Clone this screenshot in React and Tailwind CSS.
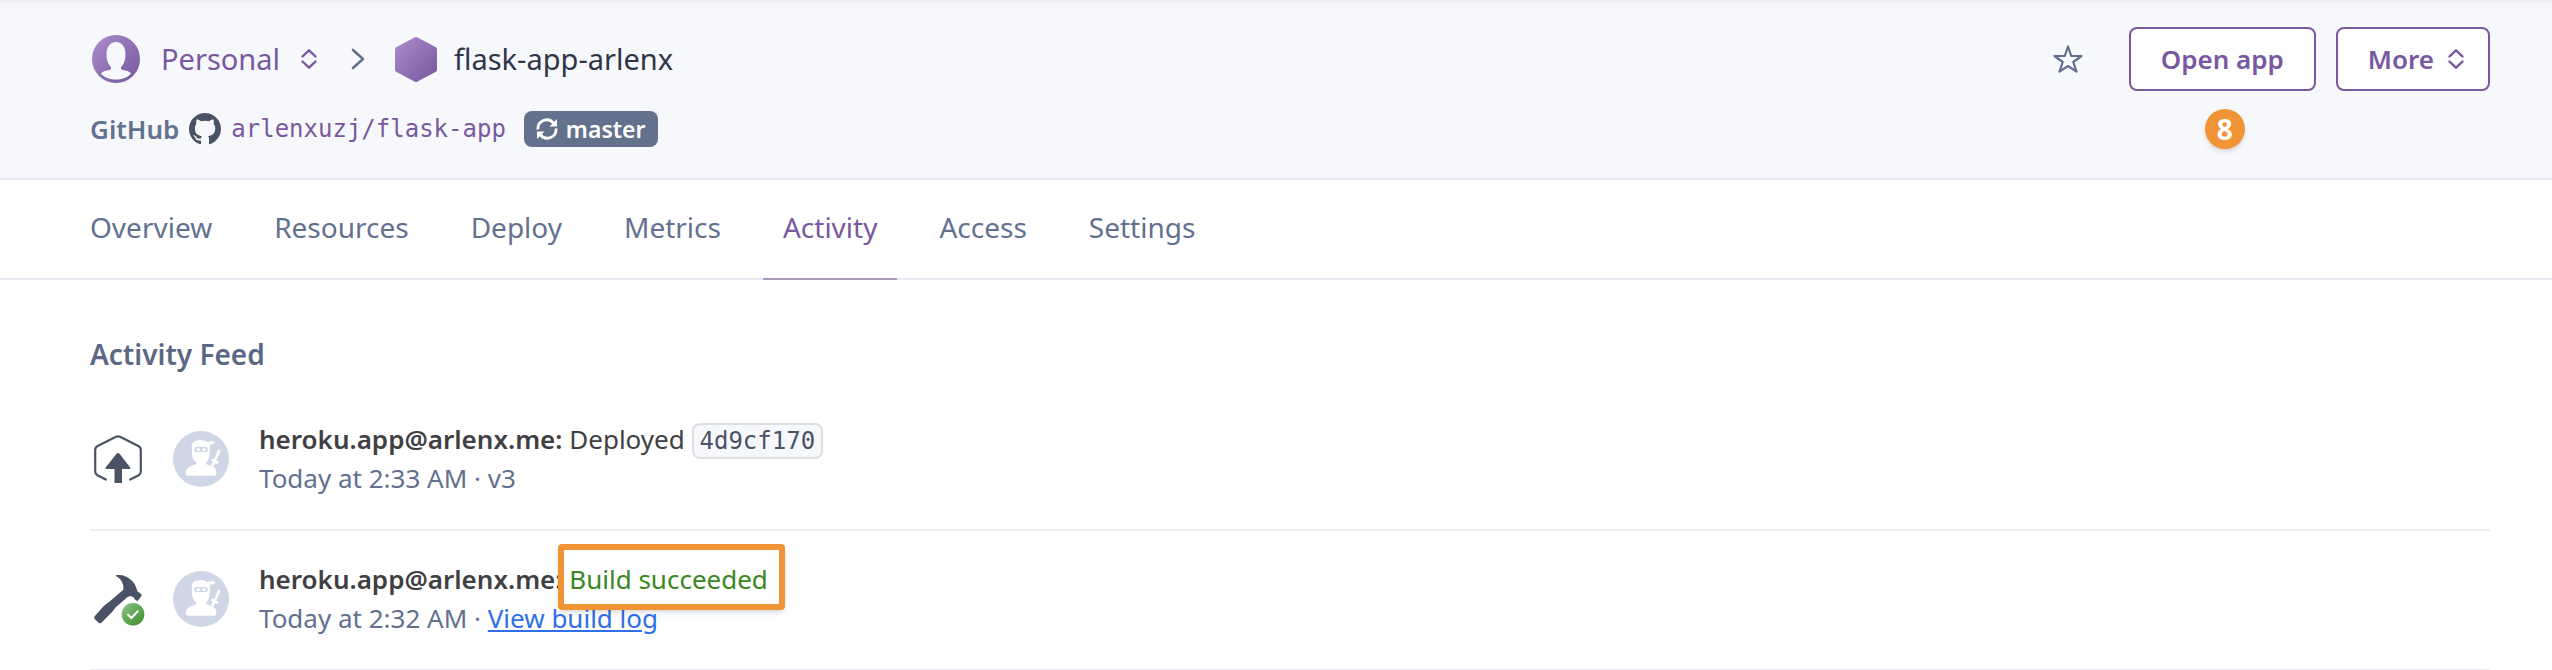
const TABS = ["Overview", "Resources", "Deploy", "Metrics", "Activity", "Access", "Settings"];

function Sort({ className }) {
  return (
    <svg className={className} width="16" height="20" viewBox="0 0 16 20" fill="none" stroke="currentColor" strokeWidth="2.4" strokeLinecap="round" strokeLinejoin="round" aria-hidden="true">
      <path d="M1.5 7.500 8 1.300l6.500 6.200M1.500 12.500 8 18.700l6.500-6.200" />
    </svg>
  );
}

function PersonIcon() {
  return (
    <svg width="48" height="48" viewBox="0 0 48 48" aria-hidden="true">
      <defs>
        <linearGradient id="person" x1="0" y1="0" x2="1" y2="1">
          <stop offset="0" stopColor="#ad8dcb" />
          <stop offset="1" stopColor="#74569c" />
        </linearGradient>
      </defs>
      <circle cx="24" cy="24" r="24" fill="url(#person)" />
      <path fill="#f7f8fc" d="M24 7c6 0 9.500 5 9.500 12.500 0 5-1.500 10-4.500 12.800v1.200c0 1 .8 1.400 3 1.800 3.500.7 6 1.700 7 3.200C35.500 42.500 30 44.500 24 44.500S12.500 42.500 9 38.500c1-1.500 3.500-2.500 7-3.200 2.200-.4 3-.8 3-1.800v-1.200c-3-2.800-4.500-7.800-4.500-12.800C14.500 12 18 7 24 7z" />
    </svg>
  );
}

function HexIcon() {
  return (
    <svg width="42" height="45" viewBox="0 0 42 45" aria-hidden="true">
      <defs>
        <linearGradient id="hex" x1="0" y1="0" x2="1" y2="1">
          <stop offset="0" stopColor="#ad8dcb" />
          <stop offset="1" stopColor="#74569c" />
        </linearGradient>
      </defs>
      <path fill="url(#hex)" d="M19.500.4a3 3 0 0 1 3 0l18 9.600a2.800 2.800 0 0 1 1.500 2.500v20a2.800 2.800 0 0 1-1.500 2.500l-18 9.600a3 3 0 0 1-3 0l-18-9.600A2.800 2.800 0 0 1 0 32.500v-20A2.800 2.800 0 0 1 1.500 10z" />
    </svg>
  );
}

function GitHubIcon() {
  return (
    <svg width="32" height="32" viewBox="0 0 16 16" fill="#4a5365" aria-hidden="true">
      <path d="M8 0C3.580 0 0 3.580 0 8c0 3.540 2.290 6.530 5.470 7.590.4.070.55-.17.55-.38 0-.19-.01-.82-.01-1.490-2.010.37-2.530-.49-2.690-.94-.09-.23-.48-.94-.82-1.130-.28-.15-.68-.52-.01-.53.63-.01 1.080.58 1.230.82.72 1.210 1.870.87 2.330.66.07-.52.28-.87.51-1.070-1.780-.2-3.640-.89-3.640-3.950 0-.87.31-1.590.82-2.150-.08-.2-.36-1.020.08-2.120 0 0 .67-.21 2.200.82.64-.18 1.320-.27 2-.27s1.360.09 2 .27c1.530-1.040 2.200-.82 2.200-.82.44 1.100.16 1.920.08 2.120.51.56.82 1.270.82 2.150 0 3.070-1.870 3.750-3.650 3.950.29.25.54.73.54 1.480 0 1.070-.01 1.930-.01 2.200 0 .21.15.46.55.38A8.010 8.010 0 0 0 16 8c0-4.420-3.580-8-8-8z" />
    </svg>
  );
}

function SyncIcon() {
  return (
    <svg width="22" height="22" viewBox="0 0 22 22" fill="none" stroke="#fff" strokeWidth="2.800" aria-hidden="true">
      <path d="M2 11.500A8.800 8.800 0 0 1 17.500 5M20 10.500A8.800 8.800 0 0 1 4.500 17" />
      <path fill="#fff" stroke="none" d="M21 1v7.500h-7.500zM1 21v-7.500h7.500z" />
    </svg>
  );
}

function DeployIcon() {
  return (
    <svg width="48" height="48" viewBox="0 0 48 48" aria-hidden="true">
      <path fill="none" stroke="#4a5365" strokeWidth="2.200" strokeLinecap="round" strokeLinejoin="round" d="M11.800 44.500 3.300 40.200Q1.200 39 1.200 36.500V15Q1.200 12.200 3.600 11L21.500 2Q24 .6 26.500 2l17.900 9q2.400 1.200 2.400 4v21.500q0 2.500-2.100 3.700l-8.500 4.300" />
      <path fill="#4a5365" d="M22.300 19q1.700-2 3.400 0l10.500 13.500q.9 1.500-.8 1.500H28v14h-7.500V34h-8q-1.700 0-.8-1.500z" />
    </svg>
  );
}

function BuildIcon() {
  return (
    <svg className="overflow-visible" width="48" height="48" viewBox="42 44 144 144" aria-hidden="true">
      <defs>
        <linearGradient id="ok" x1="0" y1="0" x2="1" y2="1">
          <stop offset="0" stopColor="#8ac48a" />
          <stop offset="1" stopColor="#3c8b26" />
        </linearGradient>
      </defs>
      <path fill="#4a5365" d="M108 45C126 42 142 48 154 60C164 69 169 80 171 90Q172 96 179 97L186 104L173 123L164 117Q160 106 148 108Q141 110 136 116L108 140L97 154L64 187Q60 190 56 187L44 176Q41 172 44 168L72 136L88 124L130 88C132 72 125 56 108 48z" />
      <circle cx="159" cy="162" r="34" fill="url(#ok)" />
      <path d="M144 163l10 10 19-20" fill="none" stroke="#fff" strokeWidth="6" strokeLinecap="round" strokeLinejoin="round" />
    </svg>
  );
}

function NinjaAvatar() {
  return (
    <svg width="56" height="56" viewBox="0 0 168 168" role="img" aria-label="User avatar">
      <circle cx="84" cy="84" r="84" fill="#cfd7e6" />
      <g fill="#fff">
        <path d="M56 44Q58 28 82 27Q96 27 102 34L118 29Q122 34 126 30L124 38L110 42Q112 56 109 76Q106 90 100 94V100Q130 108 130 122V128Q130 134 124 134H44Q38 134 38 128V122Q40 108 70 100V94Q60 88 58 76z" />
        <path d="M136 54L143 60L130 88L138 94L134 100L126 96L120 108L114 104L119 92L114 88L118 82L124 84z" />
      </g>
      <rect x="64" y="48" width="40" height="15" rx="5" fill="#cfd7e6" />
      <ellipse cx="76" cy="56" rx="6" ry="4" fill="#fff" />
      <ellipse cx="93" cy="56" rx="6" ry="4" fill="#fff" />
    </svg>
  );
}

function FeedRow({ icon, children, meta }) {
  return (
    <li className="flex items-center border-b-2 border-[#eceef4] pt-[29px] pb-[31px]">
      <div className="ml-1 w-12 shrink-0">{icon}</div>
      <div className="ml-[31px] w-14 shrink-0"><NinjaAvatar /></div>
      <div className="ml-[30px] text-[26px] leading-[39px]">
        <p className="text-[#3f3f44]">
          <strong className="font-semibold">heroku.app@arlenx.me:</strong> {children}
        </p>
        <p className="text-[#62718f]">{meta}</p>
      </div>
    </li>
  );
}

export default function App() {
  return (
    <div className="min-h-screen overflow-hidden bg-white font-['Noto_Sans',sans-serif] text-[#62718f]">
      <header className="flex items-start justify-between border-b-2 border-[#e6e9f1] bg-[#f7f8fc] pt-[27px] pr-[62px] pb-[31px] pl-[90px] shadow-[inset_0_4px_4px_-2px_#e9ebf1]">
        <div>
          <div className="flex h-16 items-center text-[29px]">
            <a href="#personal" className="ml-[2px] flex items-center text-[#79589f]">
              <PersonIcon />
              <span className="ml-[21px]">Personal</span>
              <Sort className="ml-[21px]" />
            </a>
            <svg className="ml-[34px] mr-[30px]" width="14" height="22" viewBox="0 0 14 22" fill="none" stroke="#62718f" strokeWidth="2.600" strokeLinecap="round" strokeLinejoin="round" aria-hidden="true">
              <path d="M2 2l10 9L2 20" />
            </svg>
            <HexIcon />
            <h1 className="ml-[17px] text-[#2f3648]">flask-app-arlenx</h1>
          </div>
          <div className="mt-5 flex h-9 items-center">
            <span className="text-[26px] leading-9 font-semibold">GitHub</span>
            <span className="ml-[10px]"><GitHubIcon /></span>
            <a href="#repo" className="ml-[10px] font-['DejaVu_Sans_Mono',monospace] text-[24px] text-[#79589f]">arlenxuzj/flask-app</a>
            <span className="ml-[18px] flex h-9 items-center gap-2 rounded-lg bg-[#64718c] px-3 text-[23px] font-semibold text-white">
              <SyncIcon />
              master
            </span>
          </div>
        </div>
        <div className="flex items-center">
          <button type="button" aria-label="Add to favorites" className="mr-[45px]">
            <svg width="32" height="32" viewBox="0 0 32 32" fill="none" stroke="#62718f" strokeWidth="2.200" strokeLinejoin="round" aria-hidden="true">
              <path d="M16 3.500l3.200 9.300 10.300.2-8.200 6 3.200 9.700-8.500-5.700-8.500 5.700 3.200-9.700-8.200-6 10.300-.2z" />
            </svg>
          </button>
          <div className="relative">
            <button type="button" className="h-16 rounded-lg border-2 border-[#79589f] bg-white px-[30px] text-[26px] font-semibold text-[#79589f]">Open app</button>
            <span className="absolute top-[82px] left-[76px] flex size-10 items-center justify-center rounded-full bg-[#f19436] text-[28px] font-bold text-white shadow-md">8</span>
          </div>
          <button type="button" className="ml-5 flex h-16 items-center gap-[14px] rounded-lg border-2 border-[#79589f] bg-white pr-6 pl-[30px] text-[26px] font-semibold text-[#79589f]">
            More
            <Sort />
          </button>
        </div>
      </header>

      <nav className="flex h-[100px] gap-[22px] border-b-2 border-[#e6ebf1] px-[70px] text-[28px]">
        {TABS.map((tab) => (
          <a
            key={tab}
            href={"#" + tab.toLowerCase()}
            aria-current={tab === "Activity" ? "page" : undefined}
            className={
              tab === "Activity"
                ? "-mb-[2px] flex items-center border-b-2 border-[#a695bd] px-5 pb-1 text-[#79589f]"
                : "-mb-[2px] flex items-center border-b-2 border-transparent px-5 pb-1"
            }
          >
            {tab}
          </a>
        ))}
      </nav>

      <main className="pr-[62px] pl-[90px] pt-[55px]">
        <h2 className="text-[28px] leading-[38px] font-semibold text-[#5a6885]">Activity Feed</h2>
        <ul className="mt-[18px]">
          <FeedRow icon={<DeployIcon />} meta="Today at 2:33 AM · v3">
            Deployed{" "}
            <code className="rounded-lg border-2 border-[#dcdfe4] bg-[#f7f8fc] px-[6px] py-[2px] font-['DejaVu_Sans_Mono',monospace] text-[24px] leading-7 text-[#4a5365]">4d9cf170</code>
          </FeedRow>
          <FeedRow
            icon={<BuildIcon />}
            meta={<>Today at 2:32 AM · <a href="#log" className="text-[#2f6fe8] underline">View build log</a></>}
          >
            <span className="relative text-[#3a8723]">
              Build succeeded
              <span className="absolute -top-[17px] -right-[17px] -left-[11px] h-[66px] rounded border-6 border-[#f19436] shadow-md" />
            </span>
          </FeedRow>
        </ul>
      </main>
    </div>
  );
}
